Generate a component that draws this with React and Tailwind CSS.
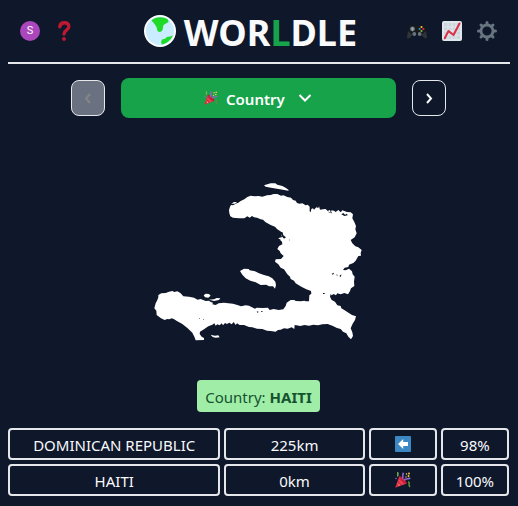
import React from "react";

function Globe() {
  return (
    <svg viewBox="0 0 32 32" className="size-8 shrink-0" aria-hidden="true">
      <circle cx="16" cy="16" r="16" fill="#fff" />
      <circle cx="16" cy="16" r="14.200" fill="#c9edff" />
      <path d="M7.500 5.500 C12 1.500 19 1.500 24 4.500 L24.500 7 L22 8.500 L19.500 10 L18.500 15 Q16.500 18.500 13.500 16 L12.500 12 L10.500 9 Z" fill="#1fdb28" />
      <path d="M28.800 20.500 C27 25 23 28.500 17.800 29.500 L17 27 L18 24.500 L21 23.800 L23 22 L26 21.500 Z" fill="#1fdb28" />
    </svg>
  );
}

function Question() {
  return (
    <svg viewBox="0 0 20 20" className="size-5" aria-hidden="true">
      <path d="M5.800 5.800 C6.200 2.800 8.300 1.800 10.400 1.800 C13.300 1.800 14.800 3.600 14.800 5.800 C14.800 9.300 10 9 10 13" fill="none" stroke="#be1931" strokeWidth="3.400" strokeLinecap="round" />
      <circle cx="10" cy="18" r="1.900" fill="#be1931" />
    </svg>
  );
}

function Gamepad() {
  return (
    <svg viewBox="0 0 20 20" className="size-5" aria-hidden="true">
      <path d="M2.500 4.500 L7 4 L8 5 H12 L13 4 L17.500 4.500 L19 9 L20 15.500 C20 18 18 18 17 16.800 L14.500 14 H5.500 L3 16.800 C2 18 0 18 0 15.500 L1 9 Z" fill="#17191b" />
      <path d="M1 10 L0 15.500 C0 18 2 18 3 16.800 L5.500 14 Z M19 10 L20 15.500 C20 18 18 18 17 16.800 L14.500 14 Z" fill="#303338" />
      <circle cx="5.500" cy="8" r="2.400" fill="#66757f" />
      <path d="M5.500 6.300v3.400M3.800 8h3.400" stroke="#99aab5" strokeWidth="1" />
      <circle cx="7.300" cy="13" r="1.900" fill="#66757f" />
      <circle cx="12.700" cy="13" r="1.900" fill="#66757f" />
      <circle cx="14.500" cy="6" r="1.100" fill="#f4c53a" />
      <circle cx="12.600" cy="8" r="1.100" fill="#3b88c3" />
      <circle cx="16.400" cy="8" r="1.100" fill="#dd2e44" />
      <circle cx="14.500" cy="10" r="1.100" fill="#77b255" />
    </svg>
  );
}

function Chart() {
  return (
    <svg viewBox="0 0 20 20" className="size-5" aria-hidden="true">
      <rect width="20" height="20" rx="2" fill="#e1e8ed" />
      <path d="M2 2h16v16H2z" fill="#ccd6dd" />
      <path d="M6 1v18M10 1v18M14 1v18M1 6h18M1 10h18M1 14h18" stroke="#e1e8ed" strokeWidth="1" />
      <path d="M2.700 17.300 L6.500 10 L11.500 14 L17.500 2.500" fill="none" stroke="#dd2e44" strokeWidth="2" strokeLinecap="round" strokeLinejoin="round" />
    </svg>
  );
}

function Gear() {
  return (
    <svg viewBox="0 0 20 20" className="size-5" aria-hidden="true">
      <g stroke="#66757f" strokeWidth="3" strokeLinecap="round">
        <path d="M10 1.500v2M10 16.500v2M1.500 10h2M16.500 10h2M4 4l1.400 1.400M14.600 14.600L16 16M16 4l-1.400 1.400M5.400 14.600L4 16" />
      </g>
      <circle cx="10" cy="10" r="6" fill="none" stroke="#66757f" strokeWidth="2.800" />
    </svg>
  );
}

function Party({ className }) {
  return (
    <svg viewBox="0 0 16 16" className={className} aria-hidden="true">
      <path d="M0.200 15.800 L4.300 4.300 C8 5 11 8 11.800 11.500 Z" fill="#dd2e44" />
      <path d="M4.300 4.300 C5.500 8 8 10.500 11.800 11.500 C11 8 8 5 4.300 4.300" fill="#a0041e" opacity=".5" />
      <path d="M2.200 11 L5 13.800 M3.600 7.800 L8 12.500" stroke="#ea596e" strokeWidth="1" />
      <path d="M2 .8 C4.500 1 1.500 3 3.200 4.300" fill="none" stroke="#77b255" strokeWidth="1.500" />
      <path d="M7 6.800 C9 5 6.800 3.500 8.500 .8 M8.800 8.300 C10 6 12.500 8 15.200 6" fill="none" stroke="#9266cc" strokeWidth="1.600" />
      <path d="M13 10 C15.800 10 12.500 12.500 15 15" fill="none" stroke="#5c913b" strokeWidth="1.500" />
      <g fill="#ffcc4d">
        <circle cx="11.500" cy="2" r=".8" />
        <circle cx="14" cy="1.500" r=".9" />
        <circle cx="13.500" cy="4" r=".9" />
        <circle cx="11" cy="5" r=".7" />
        <circle cx="4" cy="13" r=".6" />
      </g>
      <circle cx="1" cy="6.500" r=".8" fill="#9266cc" />
    </svg>
  );
}

function LeftArrow() {
  return (
    <svg viewBox="0 0 16 16" className="size-4" role="img" aria-label="West">
      <rect width="16" height="16" rx="1" fill="#3b88c3" />
      <path d="M3 8 L8.200 3 V6 H13 V10 H8.200 V13 Z" fill="#fff" />
    </svg>
  );
}

function Chevron({ d }) {
  return (
    <svg viewBox="0 0 16 16" className="size-4" aria-hidden="true">
      <path d={d} fill="none" stroke="currentColor" strokeWidth="2" />
    </svg>
  );
}

function CountryShape() {
  return (
    <svg viewBox="435 525 690 525" className="w-[230px]" role="img" aria-label="Country shape" fill="#fff">
      <path d="M690 630 L693 620 696 615 702 616 710 611 718 608 725 603 736 598 745 591 755 587 768 589 779 588 790 590 804 586 815 585 824 582 835 582 846 587 853 586 865 591 876 593 882 600 890 602 894 609 902 611 910 610 920 616 926 614 932 620 932 634 935 637 937 627 942 625 945 629 952 622 958 624 960 619 963 629 972 628 980 627 986 633 993 630 995 637 998 631 1005 632 1010 636 1018 630 1025 637 1030 631 1044 636 1055 637 1062 643 1060 655 1066 666 1071 678 1069 688 1073 700 1067 712 1055 720 1060 730 1069 739 1078 742 1088 750 1085 759 1086 767 1078 768 1070 782 1063 789 1050 794 1048 801 1037 803 1032 810 1040 811 1050 806 1059 814 1061 823 1067 830 1065 845 1066 858 1056 865 1053 873 1047 883 1036 879 1025 883 1015 880 1011 886 1004 882 998 886 995 882 993 890 998 900 1008 905 1015 916 1025 918 1027 925 1037 931 1046 937 1059 945 1071 949 1068 960 1061 971 1055 985 1060 997 1062 1008 1056 1018 1048 1010 1042 1000 1032 995 1025 987 1014 984 1000 977 986 972 970 973 957 976 943 974 930 977 916 975 904 978 892 976 887 975 886 987 878 982 866 986 855 985 845 989 837 990 830 995 815 993 804 992 790 987 774 986 760 982 750 981 735 975 722 975 714 970 710 975 704 966 698 973 691 968 684 972 678 969 672 976 668 970 662 976 655 973 650 977 646 970 640 974 628 979 615 988 603 995 602 1002 608 1010 615 1014 615 1020 590 1021 586 1010 580 998 566 985 550 972 535 964 524 957 518 955 511 958 505 957 497 960 486 955 473 945 472 932 466 925 470 910 475 900 478 892 478 885 487 880 500 879 510 875 520 873 526 876 535 874 544 879 553 889 570 890 585 893 596 899 605 897 620 903 630 902 635 906 642 908 640 913 650 915 659 910 675 908 688 910 702 911 715 915 726 919 740 916 750 917 759 922 768 926 773 923 790 924 807 923 812 930 824 927 839 930 853 928 860 918 863 908 875 900 886 900 890 903 905 904 916 902 920 904 930 904 931 886 937 881 936 873 922 868 910 862 902 857 890 850 885 842 875 837 873 830 865 823 855 808 845 803 838 793 828 785 830 778 846 777 854 768 845 760 842 753 835 747 840 738 850 733 849 725 838 715 846 712 847 702 853 708 850 698 843 693 834 687 828 680 815 675 800 667 792 659 785 658 774 653 765 652 759 648 752 653 745 649 736 655 720 655 702 653 694 649 691 640Z" />
      <path d="M795 556 L815 550 829 550 835 554 850 558 861 564 869 570 868 572 843 568 820 564 800 560Z" />
      <path d="M697 611 L705 606 714 606 708 611Z" />
      <path d="M723 813 L735 806 749 807 752 811 768 814 780 820 795 825 809 829 820 835 829 845 831 855 828 866 822 859 810 859 802 854 785 855 770 847 754 842 740 835 730 824Z" />
      <path d="M614 886 L620 881 630 882 635 887 628 893 618 892Z M630 899 L645 898 653 894 664 895 660 900 645 903Z M635 1004 L641 1006 648 1007 658 1006 662 1012 650 1013 641 1011Z" />
      <g fill="#0f172a">
        <path d="M1027 643 L1033 639 1038 644 1044 641 1046 646 1036 648Z" />
        <path d="M988 634 L994 639 996 634 999 640 990 638Z" />
        <path d="M843 698 L850 696 853 706 861 712 855 716 850 710 845 713 848 705Z" />
        <path d="M998 821 L1005 818 1004 822 1001 824Z M1012 823l4 2-2 3zM1021 828l6-5-1 8z" />
        <path d="M838 717h6v2h-6zM870 719h3v2h-3zM972 879h5v3h-5zM773 934l6 1-3 4zM786 933h5v2h-5zM601 955h2v2h-2zM613 957h2v2h-2z" />
      </g>
    </svg>
  );
}

const guesses = [
  { name: "DOMINICAN REPUBLIC", distance: "225km", icon: <LeftArrow />, percent: "98%" },
  { name: "HAITI", distance: "0km", icon: <Party className="size-4" />, percent: "100%" },
];

const cell = "flex h-8 items-center justify-center rounded border-2 border-gray-200 pt-0.5";

export default function App() {
  return (
    <div className="min-h-screen bg-slate-900 px-2 pb-2.5 font-['Noto_Sans',sans-serif] text-[15px] text-slate-50">
      <header className="flex h-16 items-center justify-between border-b-2 border-gray-200 pr-[13px] pl-3">
        <div className="flex items-center gap-[14px] pr-5">
          <button aria-label="Account" className="flex size-5 items-center justify-center rounded-full bg-[#ab47bc] font-['Roboto',sans-serif] text-[11px] text-white">S</button>
          <button aria-label="How to play"><Question /></button>
        </div>
        <div className="flex items-center gap-2">
          <Globe />
          <h1 className="pt-1 text-4xl leading-10 font-bold">WOR<span className="text-[#16a34a]">L</span>DLE</h1>
        </div>
        <div className="flex items-center gap-[15px]">
          <button aria-label="Games"><Gamepad /></button>
          <button aria-label="Statistics"><Chart /></button>
          <button aria-label="Settings"><Gear /></button>
        </div>
      </header>
      <main className="pr-px">
        <nav className="mx-auto mt-3.5 flex w-3/4 items-center gap-4">
          <button disabled aria-label="Previous round" className="flex h-9 w-[34px] items-center justify-center rounded-lg border border-gray-200 bg-gray-500 text-[#858585]">
            <Chevron d="M10 4 L6 8.500 L10 13" />
          </button>
          <label className="flex h-10 flex-1 items-center justify-center rounded-lg bg-[#16a34a] font-semibold text-white">
            <Party className="mr-2 size-3.5" />
            <select aria-label="Round" className="appearance-none bg-transparent pt-0.5 font-semibold">
              <option>Country</option>
            </select>
            <span className="ml-3"><Chevron d="M2.500 5 L8 10.500 L13.500 5" /></span>
          </label>
          <button aria-label="Next round" className="flex h-9 w-[34px] items-center justify-center rounded-lg border border-gray-200">
            <Chevron d="M6 4 L10 8.500 L6 13" />
          </button>
        </nav>
        <div className="mt-[57px] flex justify-center"><CountryShape /></div>
        <div className="mt-[30px] flex justify-center">
          <p className="flex h-8 items-center rounded bg-[#a0eda8] px-2 pt-0.5 text-[#14532d]">
            <span>Country: <strong className="font-bold">HAITI</strong></span>
          </p>
        </div>
        <table aria-label="Guesses" className="mt-4 block w-full">
          <tbody className="flex flex-col gap-1">
            {guesses.map((g) => (
              <tr key={g.name} className="grid grid-cols-7 gap-1">
                <td className={cell + " col-span-3"}>{g.name}</td>
                <td className={cell + " col-span-2"}>{g.distance}</td>
                <td className="flex h-8 items-center justify-center rounded border-2 border-gray-200">{g.icon}</td>
                <td className={cell}>{g.percent}</td>
              </tr>
            ))}
          </tbody>
        </table>
      </main>
    </div>
  );
}
